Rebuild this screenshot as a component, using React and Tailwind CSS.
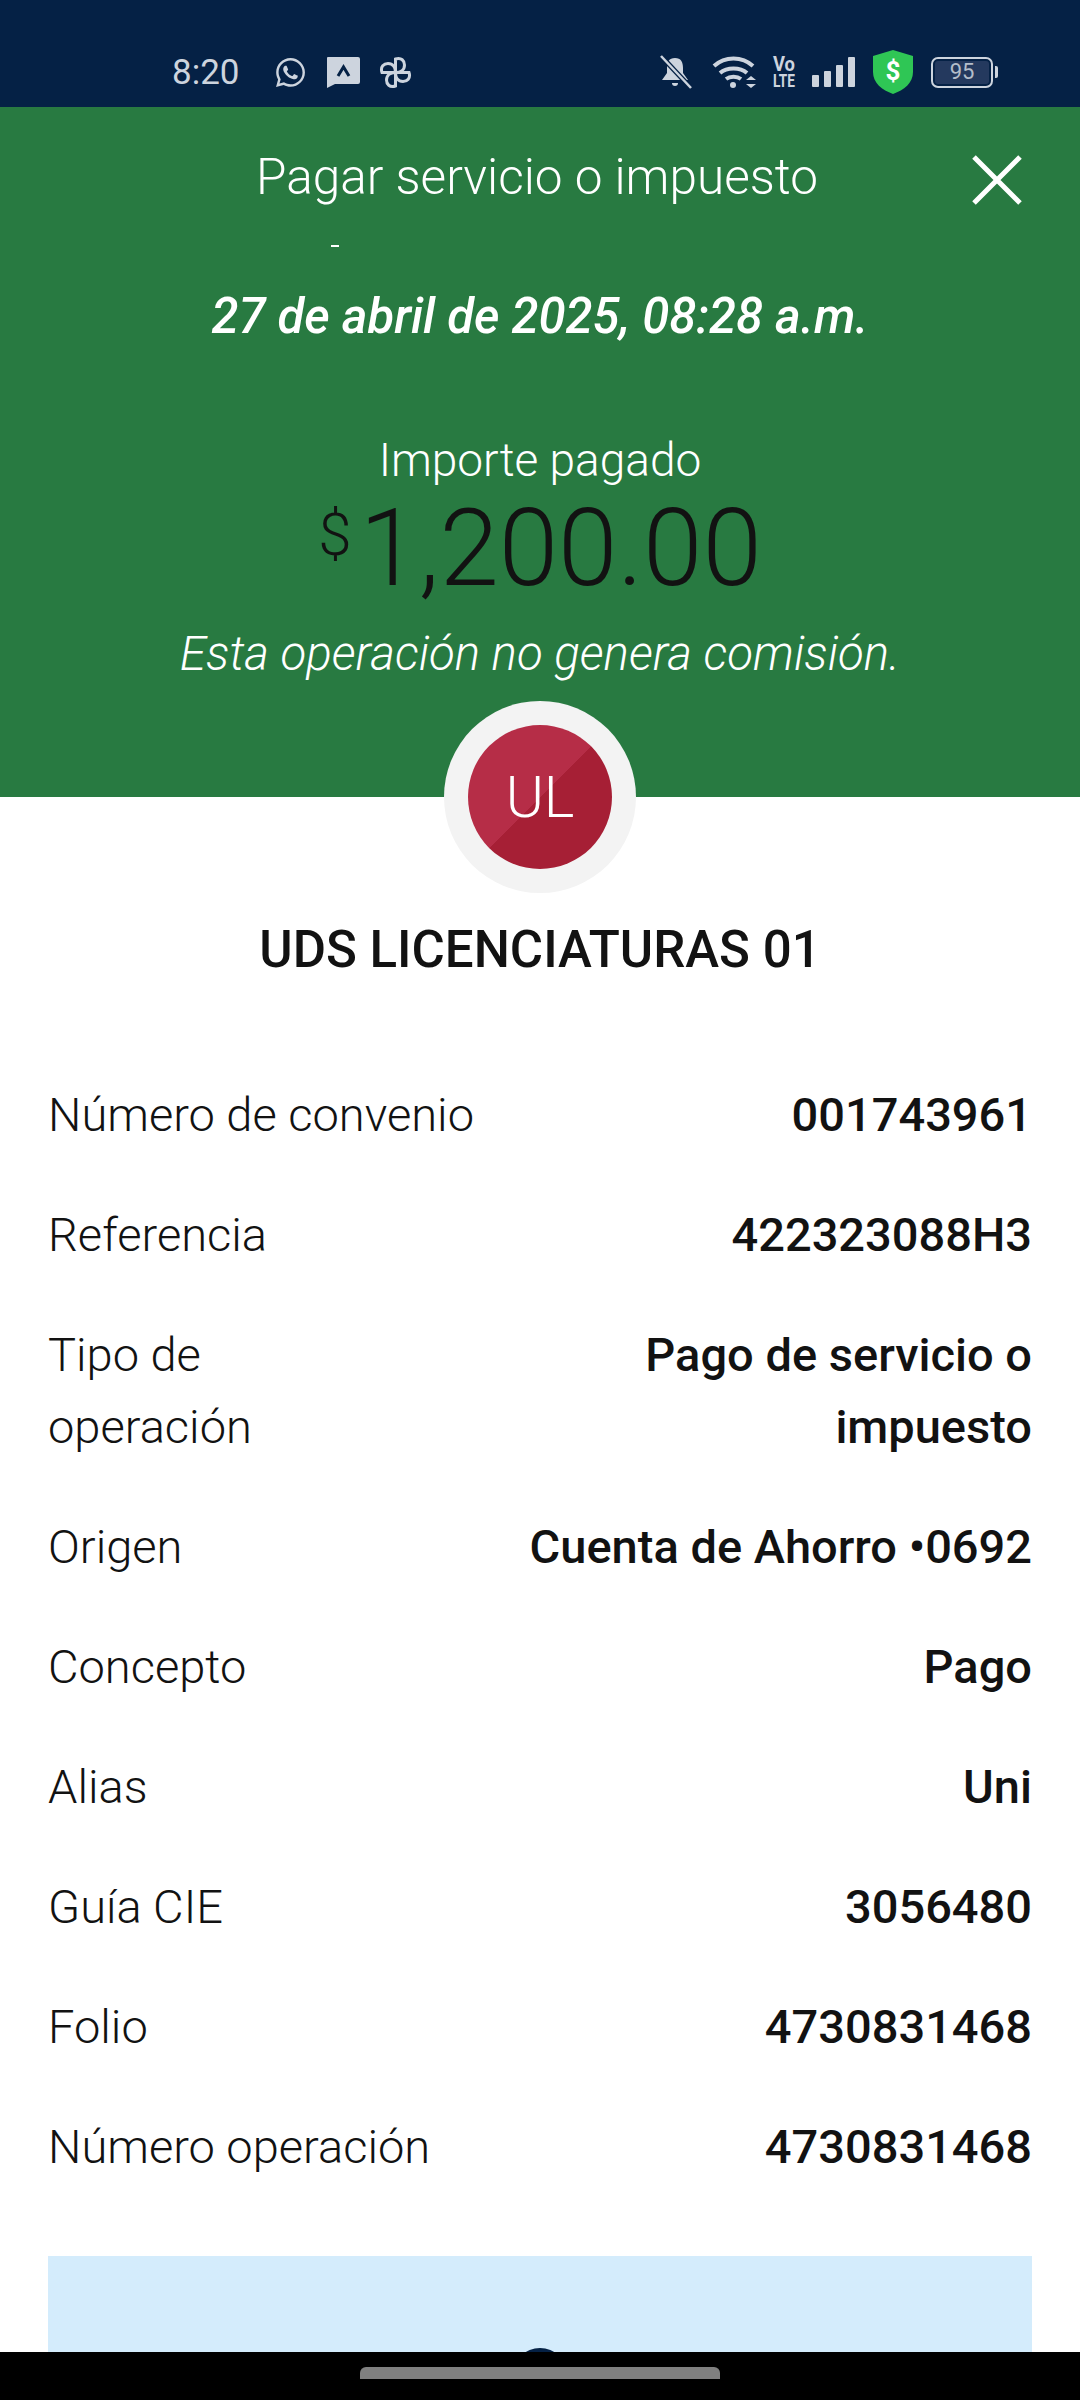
import React from "react";
import { FaWhatsapp } from "react-icons/fa";

const rows = [
  [["Número de convenio"], ["001743961"]],
  [["Referencia"], ["422323088H3"]],
  [["Tipo de", "operación"], ["Pago de servicio o", "impuesto"]],
  [["Origen"], ["Cuenta de Ahorro •0692"]],
  [["Concepto"], ["Pago"]],
  [["Alias"], ["Uni"]],
  [["Guía CIE"], ["3056480"]],
  [["Folio"], ["4730831468"]],
  [["Número operación"], ["4730831468"]],
];

function StatusLeft() {
  return (
    <div className="flex items-center text-[#cdd4de]">
      <span className="w-[102px] text-[35px] leading-none">8:20</span>
      <FaWhatsapp className="w-[33px] h-[33px]" />
      <svg className="ml-[19px]" width="35" height="32" viewBox="0 0 35 32">
        <path d="M2 1h30a2 2 0 0 1 2 2v23a2 2 0 0 1-2 2H9l-8 4V2a1 1 0 0 1 1-1z" fill="#cdd4de" />
        <path d="M12 20l5.500-9 5.500 9" fill="none" stroke="#052145" strokeWidth="3" />
      </svg>
      <svg className="ml-[18px]" width="33" height="33" viewBox="0 0 33 33" fill="none" stroke="#cdd4de" strokeWidth="3">
        <path d="M16.500 16.500H3c-2-6 2-9 6-9 5 0 7.500 4 7.500 9z" />
        <path d="M16.500 16.500V3c6-2 9 2 9 6 0 5-4 7.500-9 7.500z" />
        <path d="M16.500 16.500H30c2 6-2 9-6 9-5 0-7.500-4-7.500-9z" />
        <path d="M16.500 16.500V30c-6 2-9-2-9-6 0-5 4-7.500 9-7.500z" />
      </svg>
    </div>
  );
}

function StatusRight() {
  return (
    <div className="flex items-center text-[#cdd4de]">
      <svg width="33" height="36" viewBox="0 0 33 36">
        <path d="M16 4c6 0 8 4 8 10v5l5 7H3l5-7v-5C8 8 10 4 16 4z" fill="#cdd4de" />
        <path d="M13 29h6a3 3 0 0 1-6 0z" fill="#cdd4de" />
        <path d="M2 2l30 32" stroke="#052145" strokeWidth="5" />
        <path d="M2 2l30 32" stroke="#cdd4de" strokeWidth="2.500" />
      </svg>
      <svg className="ml-[20px]" width="44" height="36" viewBox="0 0 44 36" fill="none" stroke="#cdd4de" strokeWidth="4">
        <path d="M2 12c11-10 28-10 39 0" />
        <path d="M8 19c7-6 20-6 27 0" />
        <path d="M14 25c4-3 11-3 15 0" />
        <circle cx="21" cy="31" r="3" fill="#cdd4de" stroke="none" />
        <path d="M34 26l5-4 5 4zM34 30l5 4 5-4z" fill="#cdd4de" stroke="none" />
      </svg>
      <svg className="ml-[17px] overflow-visible" width="23" height="32" viewBox="0 0 23 32" fill="#cdd4de" fontFamily="Roboto, sans-serif" fontWeight="700">
        <text x="0" y="15" fontSize="20" textLength="22" lengthAdjust="spacingAndGlyphs">Vo</text>
        <text x="0" y="31" fontSize="18" textLength="22" lengthAdjust="spacingAndGlyphs">LTE</text>
      </svg>
      <div className="ml-[16px] flex items-end gap-[5px] h-[30px]">
        <div className="w-[7px] h-[12px] bg-[#cdd4de] rounded-[1px]" />
        <div className="w-[7px] h-[16px] bg-[#cdd4de] rounded-[1px]" />
        <div className="w-[7px] h-[22px] bg-[#cdd4de] rounded-[1px]" />
        <div className="w-[7px] h-[30px] bg-[#cdd4de] rounded-[1px]" />
      </div>
      <svg className="ml-[18px]" width="40" height="44" viewBox="0 0 40 44">
        <path d="M20 0l20 6v16c0 11-9 18-20 22C9 40 0 33 0 22V6z" fill="#2fc655" />
        <text x="20" y="30" textAnchor="middle" fontFamily="Roboto, sans-serif" fontWeight="700" fontSize="26" fill="#fff">$</text>
      </svg>
      <div className="ml-[18px] w-[62px] h-[31px] border-[2px] border-[#cdd4de] rounded-[7px] p-[2px] flex">
        <div className="flex-1 bg-[#24395e] rounded-[3px] flex items-center justify-center text-[22px] leading-none text-[#b4bdca]">95</div>
      </div>
      <div className="ml-[2px] w-[3px] h-[12px] bg-[#cdd4de] rounded-r-[2px]" />
    </div>
  );
}

export default function App() {
  return (
    <div className="w-[1080px] h-[2400px] flex flex-col overflow-hidden bg-white font-['Roboto',sans-serif] text-[#121212]">
      <div className="h-[107px] shrink-0 bg-[#052145] pt-[37px] pl-[172px] pr-[82px] flex items-center justify-between">
        <StatusLeft />
        <StatusRight />
      </div>

      <div className="flex-1 min-h-0 overflow-hidden">
        <div className="h-[690px] bg-[#287a41] relative flex flex-col items-center text-white">
          <div className="mt-[42px] pr-[6px] h-[56px] text-[49.500px] leading-[56px] font-light">Pagar servicio o impuesto</div>
          <div className="self-start ml-[331px] mt-[40px] w-[8px] h-[2px] bg-white" />
          <div className="mt-[45px] h-[50px] text-[49px] leading-[50px] font-medium italic">27 de abril de 2025, 08:28 a.m.</div>
          <div className="mt-[93px] h-[50px] text-[46px] leading-[50px] font-light">Importe pagado</div>
          <div className="mt-[22px] h-[84px] flex items-start text-[#121212] font-light">
            <span className="text-[60px] leading-[56px] mr-[8px]">$</span>
            <span className="text-[107px] leading-[84px]">1,200.00</span>
          </div>
          <div className="mt-[38px] h-[50px] text-[47.500px] leading-[50px] font-light italic">Esta operación no genera comisión.</div>
          <button className="absolute left-[972px] top-[48px] w-[50px] h-[50px]">
            <svg viewBox="0 0 50 50" className="w-full h-full" fill="none" stroke="#fff" strokeWidth="5">
              <path d="M2 2l46 46M48 2L2 48" />
            </svg>
          </button>
        </div>

        <div className="relative -mt-[96px] mx-auto w-[192px] h-[192px] rounded-full bg-[#f3f3f3] flex items-center justify-center">
          <div className="w-[144px] h-[144px] rounded-full bg-[linear-gradient(135deg,#b62d47_50%,#a61f35_50%)] flex items-center justify-center text-white text-[58px] font-light leading-none">UL</div>
        </div>

        <div className="mt-[30px] text-center text-[51px] leading-[54px] font-medium">UDS LICENCIATURAS 01</div>

        <div className="mt-[78px] mx-[48px]">
          {rows.map(([label, value], i) => (
            <div key={i} className="flex justify-between py-[24px] text-[47px] leading-[72px]">
              <div className="font-light">
                {label.map((l) => (
                  <div key={l}>{l}</div>
                ))}
              </div>
              <div className="font-medium text-right">
                {value.map((v) => (
                  <div key={v}>{v}</div>
                ))}
              </div>
            </div>
          ))}
        </div>

        <div className="mt-[49px] mx-[48px] h-[400px] bg-[#d4ecfc] pt-[92px] flex justify-center">
          <div className="w-[54px] h-[54px] rounded-full bg-[#052145]" />
        </div>
      </div>

      <div className="h-[48px] shrink-0 bg-black flex justify-center pt-[15px]">
        <div className="w-[360px] h-[12px] rounded-t-[6px] bg-[#808080]" />
      </div>
    </div>
  );
}
